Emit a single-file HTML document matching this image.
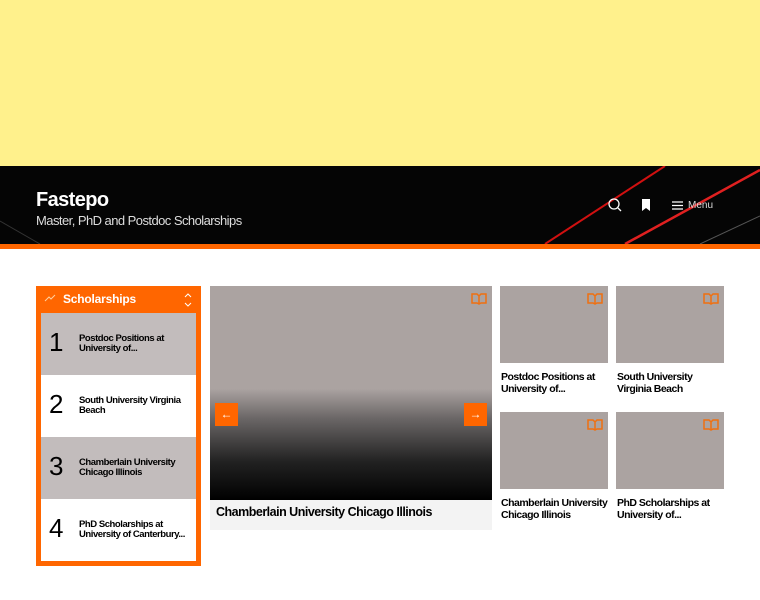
<!DOCTYPE html>
<html><head><style>
*{margin:0;padding:0;box-sizing:border-box}
body{width:760px;height:600px;overflow:hidden;background:#fff;font-family:"Liberation Sans",Arial,sans-serif;position:relative}
.yel{position:absolute;left:0;top:0;width:760px;height:166px;background:#fff18c}
.hdr{position:absolute;left:0;top:166px;width:760px;height:78px;background:#050505;overflow:hidden}
.org{position:absolute;left:0;top:244px;width:760px;height:5px;background:#ff6600}
.t1{position:absolute;left:36px;top:189px;color:#fff;font-size:20px;font-weight:bold;letter-spacing:-.6px}
.t2{position:absolute;left:36px;top:213px;color:#ddd;font-size:13px;letter-spacing:-.55px}
.side{position:absolute;left:36px;top:286px;width:165px;height:280px;background:#ff6600}
.side .h{position:absolute;left:27px;top:6px;color:#fff;font-weight:bold;font-size:12px;letter-spacing:-.2px}
.it{position:absolute;left:5px;width:155px;height:62px}
.it .n{position:absolute;left:8px;top:14px;font-size:26px;color:#000}
.it .x{position:absolute;left:38px;top:21px;font-size:9.5px;font-weight:bold;line-height:10px;color:#000;width:118px;letter-spacing:-.45px}
.img{background:#aba3a1;position:absolute}
.cap{position:absolute;font-size:10.5px;font-weight:bold;line-height:11.5px;color:#000;letter-spacing:-.5px}
.arr{position:absolute;width:23px;height:23px;background:#ff6600;color:#fff;font-size:12px;text-align:center;line-height:23px}
</style></head><body>
<div class="yel"></div>
<div class="hdr">
<svg width="760" height="78" style="position:absolute;left:0;top:0">
<line x1="545" y1="78" x2="665" y2="0" stroke="#d01010" stroke-width="2"/>
<line x1="625" y1="78" x2="760" y2="4" stroke="#e02020" stroke-width="2.5"/>
<line x1="700" y1="78" x2="760" y2="50" stroke="#555" stroke-width="1"/>
<line x1="0" y1="55" x2="40" y2="78" stroke="#333" stroke-width="1"/>
<circle cx="614" cy="38" r="5" fill="none" stroke="#fff" stroke-width="1.3"/>
<line x1="618" y1="42" x2="621" y2="45" stroke="#fff" stroke-width="1.3"/>
<path d="M642 33h8v12l-4-3-4 3z" fill="#fff"/>
<path d="M672 36h11M672 39.5h11M672 43h11" stroke="#fff" stroke-width="1.2"/>
<text x="688" y="42" fill="#ddd" font-size="10" font-family="Liberation Sans">Menu</text>
</svg>
</div>
<div class="t1">Fastepo</div>
<div class="t2">Master, PhD and Postdoc Scholarships</div>
<div class="org"></div>

<div class="side">
<svg style="position:absolute;left:8px;top:7px" width="12" height="10"><path d="M1 8l4-4 2 2 4-4" stroke="#ffd0a0" fill="none"/></svg>
<div class="h">Scholarships</div>
<svg style="position:absolute;left:147px;top:6px" width="10" height="16"><path d="M2 5l3-3 3 3M2 11l3 3 3-3" stroke="#fff" fill="none"/></svg>
<div class="it" style="top:27px;background:#c2bcbc"><div class="n">1</div><div class="x">Postdoc Positions at University of...</div></div>
<div class="it" style="top:89px;background:#fff"><div class="n">2</div><div class="x">South University Virginia Beach</div></div>
<div class="it" style="top:151px;background:#c2bcbc"><div class="n">3</div><div class="x">Chamberlain University Chicago Illinois</div></div>
<div class="it" style="top:213px;background:#fff"><div class="n">4</div><div class="x">PhD Scholarships at University of Canterbury...</div></div>
</div>

<div class="img" style="left:210px;top:286px;width:282px;height:214px;background:linear-gradient(#aba3a1 0,#aba3a1 48%,#6a6666 62%,#222 82%,#000 100%)"></div>
<div class="arr" style="left:215px;top:403px">←</div>
<div class="arr" style="left:464px;top:403px">→</div>
<div style="position:absolute;left:210px;top:500px;width:282px;height:30px;background:#f3f3f3"></div>
<div class="cap" style="left:216px;top:507px;font-size:12.5px">Chamberlain University Chicago Illinois</div>

<div class="img" style="left:500px;top:286px;width:108px;height:77px"></div>
<div class="img" style="left:616px;top:286px;width:108px;height:77px"></div>
<div class="img" style="left:500px;top:412px;width:108px;height:77px"></div>
<div class="img" style="left:616px;top:412px;width:108px;height:77px"></div>
<div class="cap" style="left:501px;top:372px">Postdoc Positions at<br>University of...</div>
<div class="cap" style="left:617px;top:372px">South University<br>Virginia Beach</div>
<div class="cap" style="left:501px;top:498px">Chamberlain University<br>Chicago Illinois</div>
<div class="cap" style="left:617px;top:498px">PhD Scholarships at<br>University of...</div>

<svg width="760" height="600" style="position:absolute;left:0;top:0;pointer-events:none">
<g fill="none" stroke="#f07010" stroke-width="1.5">
<path d="M472 294h5l2 2 2-2h5v9h-5l-2 1-2-1h-5z M479 296v8"/>
<path d="M588 294h5l2 2 2-2h5v9h-5l-2 1-2-1h-5z M595 296v8"/>
<path d="M704 294h5l2 2 2-2h5v9h-5l-2 1-2-1h-5z M711 296v8"/>
<path d="M588 420h5l2 2 2-2h5v9h-5l-2 1-2-1h-5z M595 422v8"/>
<path d="M704 420h5l2 2 2-2h5v9h-5l-2 1-2-1h-5z M711 422v8"/>
</g></svg>
</body></html>
